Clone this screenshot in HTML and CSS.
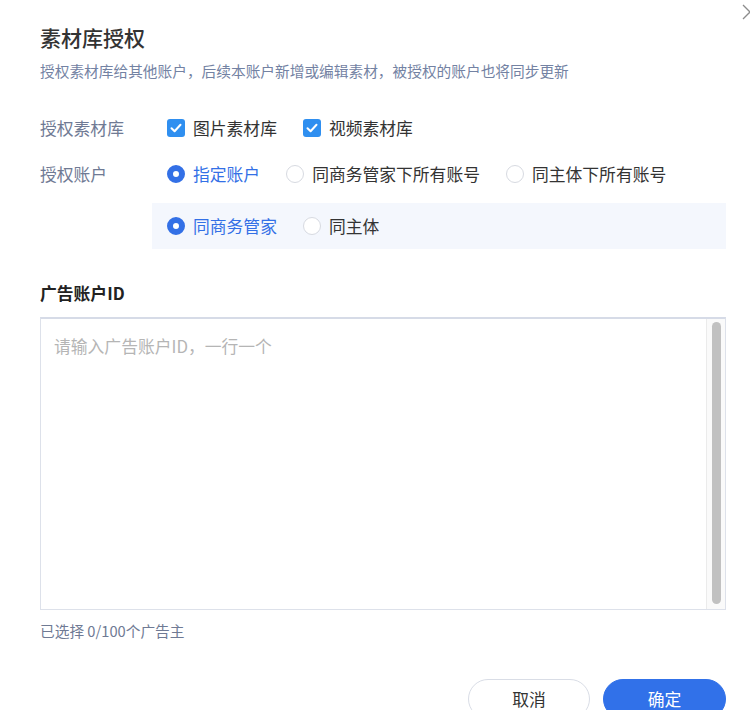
FILE: index.html
```html
<!DOCTYPE html>
<html lang="zh-CN">
<head>
<meta charset="utf-8">
<title>素材库授权</title>
<link rel="stylesheet" href="styles.css">
</head>
<body>
<div class="dialog">
  <button class="close" aria-label="关闭">
    <svg width="18" height="18" viewBox="0 0 18 18"><path d="M2 2 L16 16 M16 2 L2 16" stroke="#8c8c8c" stroke-width="1.3" fill="none"/></svg>
  </button>
  <h1 class="title">素材库授权</h1>
  <p class="desc">授权素材库给其他账户，后续本账户新增或编辑素材，被授权的账户也将同步更新</p>

  <div class="row row-first">
    <div class="label">授权素材库</div>
    <div class="options">
      <span class="opt"><span class="checkbox"><svg width="12" height="10" viewBox="0 0 12 10"><path d="M1.5 5.2 L4.6 8.2 L10.5 1.8" stroke="#fff" stroke-width="2" fill="none" stroke-linecap="round" stroke-linejoin="round"/></svg></span>图片素材库</span>
      <span class="opt"><span class="checkbox"><svg width="12" height="10" viewBox="0 0 12 10"><path d="M1.5 5.2 L4.6 8.2 L10.5 1.8" stroke="#fff" stroke-width="2" fill="none" stroke-linecap="round" stroke-linejoin="round"/></svg></span>视频素材库</span>
    </div>
  </div>

  <div class="row row-second">
    <div class="label">授权账户</div>
    <div class="options">
      <span class="opt active"><span class="radio on"></span>指定账户</span>
      <span class="opt"><span class="radio"></span>同商务管家下所有账号</span>
      <span class="opt"><span class="radio"></span>同主体下所有账号</span>
    </div>
  </div>

  <div class="sub">
    <span class="opt active"><span class="radio on"></span>同商务管家</span>
    <span class="opt"><span class="radio"></span>同主体</span>
  </div>

  <div class="section-label">广告账户ID</div>
  <div class="input-box">
    <textarea class="ids" placeholder="请输入广告账户ID，一行一个"></textarea>
    <div class="scroll"><div class="thumb"></div></div>
  </div>
  <div class="hint">已选择 0/100个广告主</div>

  <div class="footer">
    <button class="btn btn-cancel">取消</button>
    <button class="btn btn-ok">确定</button>
  </div>
</div>
</body>
</html>
```

FILE: styles.css
```css
html, body {
  margin: 0;
  padding: 0;
  background: #fff;
  overflow: hidden;
}

body {
  font-family: "Noto Sans CJK SC", "Noto Sans", sans-serif;
  color: #333;
}

.dialog {
  position: relative;
  padding: 22px 24px 0 40px;
}

.close {
  position: absolute;
  top: 3px;
  right: -9px;
  width: 18px;
  height: 18px;
  padding: 0;
  border: 0;
  background: none;
}

.close svg {
  display: block;
}

.title {
  margin: 0;
  font-size: 21px;
  line-height: 30px;
  font-weight: 500;
  color: #333;
}

.desc {
  margin: 9px 0 0;
  font-size: 14.7px;
  line-height: 20px;
  color: #7382a3;
}

.row {
  display: flex;
  align-items: center;
  height: 24px;
}

.row-first {
  margin-top: 35px;
}

.row-second {
  margin-top: 22px;
}

.label {
  width: 127px;
  flex: none;
  font-size: 16.8px;
  line-height: 24px;
  color: #6f7a94;
}

.options {
  display: flex;
  align-items: center;
}

.opt {
  display: inline-flex;
  align-items: center;
  gap: 8px;
  margin-right: 26px;
  font-size: 16.8px;
  line-height: 24px;
  color: #333;
  white-space: nowrap;
}

.opt.active {
  color: #3370e6;
}

.checkbox {
  width: 18px;
  height: 18px;
  border-radius: 3px;
  background: #2f8ff0;
  display: inline-flex;
  align-items: center;
  justify-content: center;
  box-sizing: border-box;
}

.checkbox svg {
  display: block;
}

.radio {
  width: 18px;
  height: 18px;
  border-radius: 50%;
  box-sizing: border-box;
  border: 1px solid #d7dae1;
  background: #fff;
}

.radio.on {
  border: 6px solid #3370e6;
}

.sub {
  display: flex;
  align-items: center;
  margin: 17px 0 0 112px;
  padding-left: 15px;
  height: 46px;
  background: #f4f7fd;
}

.section-label {
  margin-top: 32px;
  font-size: 16.8px;
  line-height: 24px;
  font-weight: 700;
  color: #222;
}

.input-box {
  margin-top: 12px;
  height: 293px;
  box-sizing: border-box;
  border: 1px solid #dde1ea;
  border-top: 2px solid #d6dbe7;
  display: flex;
}

.ids {
  flex: 1;
  border: 0;
  outline: none;
  resize: none;
  margin: 0;
  padding: 15px 13px;
  font-family: inherit;
  font-size: 16.8px;
  line-height: 24px;
  color: #333;
  background: #fff;
}

.ids::placeholder {
  color: #b5b5b5;
}

.scroll {
  width: 19px;
  flex: none;
  border-left: 1px solid #ebebeb;
  background: #fafafa;
  padding: 3px 4px 5px 5px;
  box-sizing: border-box;
  display: flex;
}

.thumb {
  flex: 1;
  border-radius: 5px;
  background: #c1c1c1;
}

.hint {
  margin-top: 11px;
  font-size: 14.7px;
  line-height: 20px;
  color: #6f7a94;
}

.footer {
  margin-top: 38px;
  display: flex;
  justify-content: flex-end;
  gap: 13px;
}

.btn {
  height: 40px;
  border-radius: 20px;
  font-family: inherit;
  font-size: 16.8px;
  padding: 0;
  cursor: pointer;
}

.btn-cancel {
  width: 122px;
  background: #fff;
  border: 1px solid #d9dde6;
  color: #333;
}

.btn-ok {
  width: 123px;
  background: #3171e9;
  border: 1px solid #3171e9;
  color: #fff;
}
```
